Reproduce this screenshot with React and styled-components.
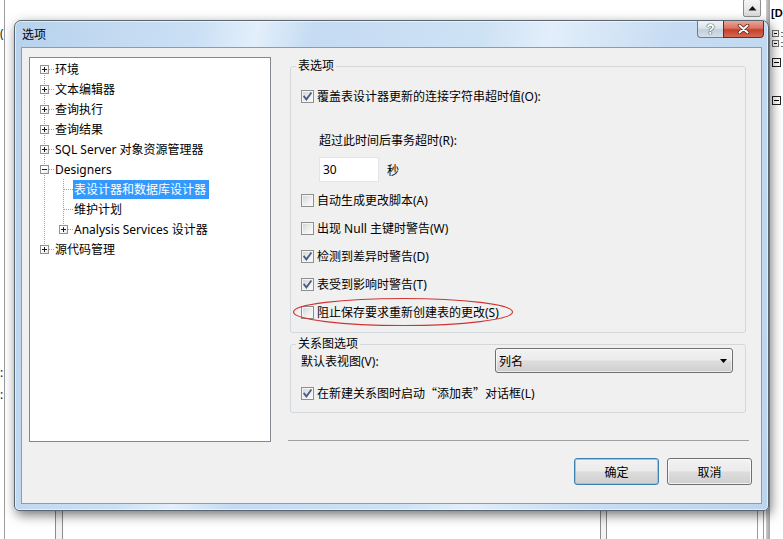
import React from "react";
import styled, { createGlobalStyle } from "styled-components";

const GlobalStyle = createGlobalStyle`
  html, body {
    margin: 0;
    padding: 0;
    background: #fff;
  }
  body {
    font-family: "Noto Sans", "Noto Sans CJK SC", sans-serif;
    font-size: 12px;
    color: #000;
    overflow: hidden;
  }
  * {
    box-sizing: border-box;
  }
`;

const treeItems = [
  { label: "环境", level: 0, exp: "plus" },
  { label: "文本编辑器", level: 0, exp: "plus" },
  { label: "查询执行", level: 0, exp: "plus" },
  { label: "查询结果", level: 0, exp: "plus" },
  { label: "SQL Server 对象资源管理器", level: 0, exp: "plus" },
  { label: "Designers", level: 0, exp: "minus" },
  { label: "表设计器和数据库设计器", level: 1, selected: true },
  { label: "维护计划", level: 1 },
  { label: "Analysis Services 设计器", level: 1, exp: "plus", last: true },
  { label: "源代码管理", level: 0, exp: "plus", last: true },
];

const tableOptions = [
  { label: "自动生成更改脚本(A)", checked: false },
  { label: "出现 Null 主键时警告(W)", checked: false },
  { label: "检测到差异时警告(D)", checked: true },
  { label: "表受到影响时警告(T)", checked: true },
  { label: "阻止保存要求重新创建表的更改(S)", checked: false, circled: true },
];

function CheckBox({ checked }) {
  return (
    <Box>
      {checked && (
        <svg width="11" height="11" viewBox="0 0 11 11">
          <path
            d="M2.2 5.6 L4.4 8.4 L8.9 2.2"
            fill="none"
            stroke="#4a5e82"
            strokeWidth="1.8"
            strokeLinecap="square"
          />
        </svg>
      )}
    </Box>
  );
}

function TreeRow({ item, index }) {
  const up = !(item.level === 0 && index === 0);
  const down = !item.last;
  return (
    <Row>
      {item.level > 0 && <Cell $up $down />}
      <Cell $up={up} $down={down} $branch>
        {item.exp && <Expander $open={item.exp === "minus"} />}
      </Cell>
      <NodeLabel $selected={item.selected}>{item.label}</NodeLabel>
    </Row>
  );
}

export default function App() {
  return (
    <>
      <GlobalStyle />
      <Desktop>
        {/* window behind the dialog */}
        <BackLine $x={4} $color="#9c9c9c" />
        <BackGlyph style={{ top: 26 }}>(</BackGlyph>
        <BackGlyph style={{ top: 365 }}>:</BackGlyph>
        <BackGlyph style={{ top: 387 }}>:</BackGlyph>
        <BackLine $x={55} $top={505} $color="#8c8c8c" />
        <BackLine $x={56} $top={505} $w={6} $color="#f3f3f3" />
        <BackLine $x={62} $top={505} $color="#8c8c8c" />
        <BackLine $x={600} $top={505} $color="#8c8c8c" />
        <BackLine $x={601} $top={505} $w={5} $color="#f3f3f3" />
        <BackLine $x={606} $top={505} $color="#8c8c8c" />
        <BackLine $x={757} $top={505} $color="#9a9a9a" />
        <BackLine $x={763} $top={505} $color="#9a9a9a" />
        <SideBand />
        <ScrollArrow>
          <svg width="9" height="6" viewBox="0 0 9 6">
            <path d="M0.5 5.5 L4.5 1 L8.5 5.5 Z" fill="#111" />
          </svg>
        </ScrollArrow>
        <BackTitle>[D</BackTitle>
        <MiniNode style={{ top: 30 }} />
        <MiniNode style={{ top: 40 }} />
        <MiniFold style={{ top: 58 }} />
        <MiniFold style={{ top: 96 }} />

        <Dialog>
          <TitleBar>
            <Title>选项</Title>
            <Caption>
              <HelpButton>?</HelpButton>
              <CloseButton>
                <svg width="13" height="10" viewBox="0 0 13 10">
                  <path
                    d="M2.5 1.5 L10.5 8.5 M10.5 1.5 L2.5 8.5"
                    stroke="#5b2119"
                    strokeWidth="3.6"
                    strokeLinecap="round"
                  />
                  <path
                    d="M2.5 1.5 L10.5 8.5 M10.5 1.5 L2.5 8.5"
                    stroke="#fff"
                    strokeWidth="2"
                    strokeLinecap="round"
                  />
                </svg>
              </CloseButton>
            </Caption>
          </TitleBar>

          <Body>
            <Tree>
              {treeItems.map((item, i) => (
                <TreeRow key={item.label} item={item} index={i} />
              ))}
            </Tree>

            <Side>
              <GroupBox>
                <Legend>表选项</Legend>
                <GroupBody $pad="13px 12px 6px 10px">
                  <CheckRow $h={20}>
                    <CheckBox checked />
                    <span>覆盖表设计器更新的连接字符串超时值(O):</span>
                  </CheckRow>
                  <FieldLabel>超过此时间后事务超时(R):</FieldLabel>
                  <TimeoutRow>
                    <TextBox>30</TextBox>
                    <span>秒</span>
                  </TimeoutRow>
                  <OptionList>
                    {tableOptions.map((opt) => (
                      <CheckRow key={opt.label} $h={28}>
                        <CheckBox checked={opt.checked} />
                        <span>{opt.label}</span>
                        {opt.circled && (
                          <Ring width="222" height="30" viewBox="0 0 222 30">
                            <ellipse
                              cx="111"
                              cy="15"
                              rx="109.5"
                              ry="13.5"
                              fill="none"
                              stroke="#cf3434"
                              strokeWidth="1.2"
                            />
                          </Ring>
                        )}
                      </CheckRow>
                    ))}
                  </OptionList>
                </GroupBody>
              </GroupBox>

              <GroupBox $top={4}>
                <Legend>关系图选项</Legend>
                <GroupBody $pad="0 12px 9px 10px">
                  <ViewRow>
                    <span>默认表视图(V):</span>
                    <Select>
                      <span>列名</span>
                      <svg width="7" height="4" viewBox="0 0 7 4">
                        <path d="M0 0 L7 0 L3.5 4 Z" fill="#000" />
                      </svg>
                    </Select>
                  </ViewRow>
                  <CheckRow $h={20} $top={10}>
                    <CheckBox checked />
                    <span>
                      在新建关系图时启动<Quote $open>“</Quote>添加表<Quote>”</Quote>对话框(L)
                    </span>
                  </CheckRow>
                </GroupBody>
              </GroupBox>

              <Separator />

              <ButtonRow>
                <PushButton $default>确定</PushButton>
                <PushButton>取消</PushButton>
              </ButtonRow>
            </Side>
          </Body>
        </Dialog>
      </Desktop>
    </>
  );
}

const Desktop = styled.div`
  position: relative;
  width: 783px;
  height: 539px;
  overflow: hidden;
  background: #fff;
`;

const BackLine = styled.div`
  position: absolute;
  top: ${(p) => p.$top || 0}px;
  bottom: 0;
  left: ${(p) => p.$x}px;
  width: ${(p) => p.$w || 1}px;
  background: ${(p) => p.$color};
`;

const BackGlyph = styled.span`
  position: absolute;
  left: 0;
  font-size: 12px;
  line-height: 16px;
  color: #222;
`;

const SideBand = styled.div`
  position: absolute;
  top: 0;
  bottom: 0;
  left: 766px;
  width: 4px;
  background: linear-gradient(to right, #c9c9c9, #a4a4a4);
`;

const ScrollArrow = styled.div`
  position: absolute;
  left: 743px;
  top: -1px;
  width: 18px;
  height: 18px;
  border: 1px solid #8e8e8e;
  border-radius: 2px;
  background: linear-gradient(to bottom, #f6f6f6, #dcdcdc);
  display: flex;
  align-items: center;
  justify-content: center;
`;

const BackTitle = styled.span`
  position: absolute;
  left: 771px;
  top: 5px;
  font-family: "Liberation Sans", sans-serif;
  font-weight: bold;
  font-size: 11px;
  line-height: 16px;
`;

const MiniNode = styled.div`
  position: absolute;
  left: 772px;
  width: 7px;
  height: 7px;
  border: 1px solid #707070;
  background: #fff;
  &::before {
    content: "";
    position: absolute;
    left: 1px;
    top: 2px;
    width: 3px;
    height: 1px;
    background: #000;
  }
  &::after {
    content: "";
    position: absolute;
    left: 8px;
    top: 1px;
    width: 4px;
    height: 3px;
    border-top: 1px solid #777;
    border-bottom: 1px solid #777;
  }
`;

const MiniFold = styled.div`
  position: absolute;
  left: 772px;
  width: 9px;
  height: 9px;
  border: 1px solid #222;
  background: #fff;
  &::before {
    content: "";
    position: absolute;
    left: 1px;
    top: 3px;
    width: 5px;
    height: 1px;
    background: #000;
  }
`;

const Dialog = styled.div`
  position: absolute;
  left: 14px;
  top: 20px;
  width: 755px;
  height: 491px;
  border: 1px solid #5a6572;
  border-radius: 7px 7px 5px 5px;
  background: linear-gradient(
    100deg,
    #b8d2ec 0%,
    #cbe0f5 22%,
    #e3effa 29%,
    #c5dbf2 36%,
    #cee2f5 56%,
    #e2eefa 64%,
    #c8ddf3 78%,
    #bcd5ee 100%
  );
  box-shadow: inset 0 0 0 1px rgba(255, 255, 255, 0.55),
    2px 4px 12px rgba(0, 0, 0, 0.55);
  display: flex;
  flex-direction: column;
`;

const TitleBar = styled.div`
  height: 26px;
  flex: none;
  display: flex;
  align-items: flex-start;
  padding-left: 7px;
`;

const Title = styled.div`
  line-height: 25px;
  font-family: "Noto Sans CJK SC", sans-serif;
  font-size: 12px;
`;

const Caption = styled.div`
  margin-left: auto;
  margin-right: 4px;
  display: flex;
`;

const HelpButton = styled.div`
  width: 26px;
  height: 17px;
  border: 1px solid #6f7d8b;
  border-right: none;
  border-top: none;
  border-radius: 0 0 0 4px;
  background: linear-gradient(to bottom, #eef3f8 0%, #dbe3eb 45%, #c3ced9 55%, #d6e0ea 100%);
  display: flex;
  align-items: center;
  justify-content: center;
  font-family: "Liberation Sans", sans-serif;
  font-weight: bold;
  font-size: 14px;
  line-height: 16px;
  color: #fff;
  text-shadow: 0 0 1px #3e4b58, 0 0 1px #3e4b58, 0 0 1px #3e4b58;
`;

const CloseButton = styled.div`
  width: 41px;
  height: 17px;
  border: 1px solid #6b2a20;
  border-top: none;
  border-radius: 0 0 4px 0;
  background: linear-gradient(to bottom, #e8a89a 0%, #d9725f 45%, #c3402a 55%, #d66a53 100%);
  display: flex;
  align-items: center;
  justify-content: center;
`;

const Body = styled.div`
  flex: 1;
  margin: 0 6px 6px;
  border: 1px solid #8d9bab;
  background: #f0f0f0;
  padding: 9px 9px 0 7px;
  display: grid;
  grid-template-columns: 242px 464px;
  column-gap: 17px;
  align-items: start;
`;

const Tree = styled.div`
  height: 385px;
  border: 1px solid #828790;
  background: #fff;
  padding: 1px 0 0 5px;
  font-size: 12px;
`;

const Row = styled.div`
  display: flex;
  height: 20px;
`;

const dots = `
  background-image: linear-gradient(to bottom, #a0a0a0 50%, transparent 50%);
  background-size: 1px 2px;
`;

const Cell = styled.div`
  position: relative;
  flex: none;
  width: 19px;
  &::before {
    content: "";
    position: absolute;
    left: 9px;
    width: 1px;
    top: ${(p) => (p.$up ? "0" : "10px")};
    bottom: ${(p) => (p.$down ? "0" : "10px")};
    ${dots}
  }
  &::after {
    content: "";
    display: ${(p) => (p.$branch ? "block" : "none")};
    position: absolute;
    top: 10px;
    left: 10px;
    right: 0;
    height: 1px;
    background-image: linear-gradient(to right, #a0a0a0 50%, transparent 50%);
    background-size: 2px 1px;
  }
`;

const Expander = styled.span`
  position: absolute;
  left: 5px;
  top: 6px;
  width: 9px;
  height: 9px;
  border: 1px solid #919191;
  background: linear-gradient(135deg, #fff 40%, #e6e6e6);
  z-index: 1;
  &::before {
    content: "";
    position: absolute;
    left: 1px;
    top: 3px;
    width: 5px;
    height: 1px;
    background: #1a1a1a;
  }
  &::after {
    content: "";
    display: ${(p) => (p.$open ? "none" : "block")};
    position: absolute;
    left: 3px;
    top: 1px;
    width: 1px;
    height: 5px;
    background: #1a1a1a;
  }
`;

const NodeLabel = styled.div`
  align-self: center;
  height: 19px;
  line-height: 19px;
  padding: 0 3px 0 1px;
  white-space: nowrap;
  background: ${(p) => (p.$selected ? "#3399ff" : "transparent")};
  color: ${(p) => (p.$selected ? "#fff" : "#000")};
`;

const Side = styled.div`
  display: flex;
  flex-direction: column;
`;

const GroupBox = styled.fieldset`
  margin: ${(p) => p.$top ?? 2}px 6px 0 2px;
  padding: 0;
  min-width: 0;
  border: 1px solid #d3d8dc;
  border-radius: 3px;
`;

const Legend = styled.legend`
  margin-left: 5px;
  padding: 0 2px;
  line-height: 14px;
  font-size: 12px;
`;

const GroupBody = styled.div`
  padding: ${(p) => p.$pad};
  display: flex;
  flex-direction: column;
`;

const CheckRow = styled.div`
  position: relative;
  display: flex;
  align-items: center;
  gap: 3px;
  height: ${(p) => p.$h}px;
  margin-top: ${(p) => p.$top || 0}px;
  white-space: nowrap;
`;

const Quote = styled.span`
  display: inline-block;
  width: 12px;
  text-align: ${(p) => (p.$open ? "right" : "left")};
  font-family: "Noto Sans CJK SC", sans-serif;
`;

const Box = styled.span`
  flex: none;
  width: 13px;
  height: 13px;
  border: 1px solid #8e8f8f;
  background: linear-gradient(135deg, #cdd0d5 0%, #eeeeee 55%, #fbfbfb 100%);
  box-shadow: inset 0 0 0 1px #f5f5f5;
  display: flex;
  align-items: center;
  justify-content: center;
`;

const Ring = styled.svg`
  position: absolute;
  left: -9px;
  top: -1px;
  pointer-events: none;
`;

const FieldLabel = styled.div`
  margin: 25px 0 0 18px;
  line-height: 20px;
`;

const TimeoutRow = styled.div`
  margin: 6px 0 0 18px;
  display: flex;
  align-items: center;
  gap: 8px;
  height: 25px;
`;

const TextBox = styled.div`
  width: 60px;
  height: 25px;
  padding-left: 3px;
  line-height: 23px;
  background: #fff;
  border: 1px solid #e1e4ea;
`;

const OptionList = styled.div`
  margin-top: 4px;
  display: flex;
  flex-direction: column;
`;

const ViewRow = styled.div`
  margin-top: -3px;
  height: 25px;
  display: flex;
  align-items: center;
  justify-content: space-between;
`;

const Select = styled.div`
  width: 238px;
  height: 25px;
  border: 1px solid #707070;
  border-radius: 3px;
  background: linear-gradient(to bottom, #f2f2f2 0%, #ebebeb 48%, #dddddd 52%, #cfcfcf 100%);
  box-shadow: inset 0 0 0 1px rgba(255, 255, 255, 0.6);
  display: flex;
  align-items: center;
  justify-content: space-between;
  padding: 0 5px 0 3px;
`;

const Separator = styled.div`
  margin: 27px 3px 0 0;
  height: 1px;
  background: #a0a0a0;
`;

const ButtonRow = styled.div`
  margin-top: 17px;
  display: flex;
  justify-content: flex-end;
  gap: 8px;
`;

const PushButton = styled.div`
  width: 85px;
  height: 27px;
  border: 1px solid ${(p) => (p.$default ? "#3c7fb1" : "#707070")};
  border-radius: 3px;
  background: linear-gradient(to bottom, #f2f2f2 0%, #ebebeb 48%, #dddddd 52%, #cfcfcf 100%);
  box-shadow: inset 0 0 0 1px
    ${(p) => (p.$default ? "rgba(130, 200, 235, 0.9)" : "rgba(255, 255, 255, 0.7)")};
  display: flex;
  align-items: center;
  justify-content: center;
  font-size: 12px;
`;
